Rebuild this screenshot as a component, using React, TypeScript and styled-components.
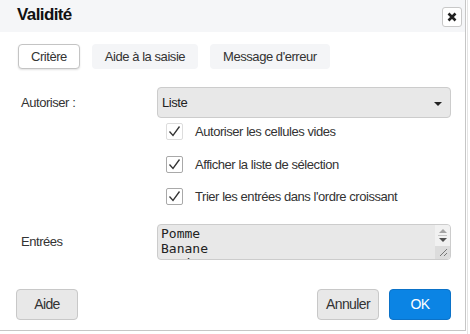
import * as React from 'react'
import styled, { createGlobalStyle } from 'styled-components'

const GlobalStyle = createGlobalStyle`
  html, body {
    margin: 0;
    padding: 0;
    background: #ffffff;
  }
  body {
    font-family: 'Liberation Sans', Arial, sans-serif;
    font-size: 13px;
    letter-spacing: -0.45px;
    color: #333333;
  }
`

const tabs = ['Critère', 'Aide à la saisie', "Message d'erreur"]

const options = [
  'Autoriser les cellules vides',
  'Afficher la liste de sélection',
  "Trier les entrées dans l'ordre croissant",
]

export default function App() {
  return (
    <Page>
      <GlobalStyle />
      <Dialog>
        <Header>
          <Title>Validité</Title>
          <CloseButton aria-label="Fermer">
            <svg width="10" height="10" viewBox="0 0 10 10">
              <path d="M1.5 1.5 L8.5 8.5 M8.5 1.5 L1.5 8.5" stroke="#222" strokeWidth="2.6" />
            </svg>
          </CloseButton>
        </Header>
        <TabBar>
          {tabs.map((tab, i) => (
            <Tab key={tab} active={i === 0}>
              {tab}
            </Tab>
          ))}
        </TabBar>
        <Form>
          <FieldRow>
            <Label>Autoriser :</Label>
            <Select>
              <span>Liste</span>
              <Caret />
            </Select>
          </FieldRow>
          <Checks>
            {options.map((text, i) => (
              <CheckRow key={text}>
                <CheckBox focused={i === 0}>
                  <svg width="15" height="15" viewBox="0 0 15 15">
                    <polyline
                      points="2.5,7.5 6,11.5 12.5,2.5"
                      fill="none"
                      stroke="#333"
                      strokeWidth="1.3"
                    />
                  </svg>
                </CheckBox>
                <CheckLabel>{text}</CheckLabel>
              </CheckRow>
            ))}
          </Checks>
          <FieldRow>
            <Label>Entrées</Label>
            <EntriesBox>
              <Entries readOnly value={'Pomme\nBanane\nCerise\nOrange'} />
              <ScrollRail>
                <ArrowUp />
                <RailDivider />
                <ArrowDown />
                <ResizeCorner>
                  <svg width="9" height="9" viewBox="0 0 9 9">
                    <line x1="1" y1="8" x2="8" y2="1" stroke="#777" strokeWidth="1" />
                    <line x1="5" y1="8" x2="8" y2="5" stroke="#777" strokeWidth="1" />
                  </svg>
                </ResizeCorner>
              </ScrollRail>
            </EntriesBox>
          </FieldRow>
        </Form>
        <Footer>
          <Button>Aide</Button>
          <Spacer />
          <Button>Annuler</Button>
          <Button primary>OK</Button>
        </Footer>
      </Dialog>
      <SheetEdge />
    </Page>
  )
}

const Page = styled.div`
  display: flex;
  width: 470px;
  height: 334px;
  overflow: hidden;
`

const Dialog = styled.div`
  width: 467px;
  height: 332px;
  flex: none;
  box-sizing: border-box;
  margin: -1px 0 0 -1px;
  border: 1px solid #c6c6c6;
  background: #ffffff;
  display: flex;
  flex-direction: column;
`

const SheetEdge = styled.div`
  flex: 1;
  margin-left: 1px;
  border-left: 1px solid #e4e4e4;
`

const Header = styled.div`
  height: 32px;
  flex: none;
  background: #f5f6f8;
  display: flex;
  align-items: center;
  padding: 0 3px 0 17px;
`

const Title = styled.div`
  flex: 1;
  font-size: 17px;
  letter-spacing: -0.6px;
  font-weight: bold;
  color: #111;
  padding-bottom: 2px;
`

const CloseButton = styled.div`
  width: 20px;
  height: 20px;
  box-sizing: border-box;
  border: 1px solid #c8c8c8;
  border-radius: 3px;
  background: #fff;
  display: flex;
  align-items: center;
  justify-content: center;
  margin-top: 1px;
`

const TabBar = styled.div`
  display: flex;
  gap: 12px;
  padding: 12px 0 0 18px;
`

const Tab = styled.div<{ active?: boolean }>`
  height: 25px;
  box-sizing: border-box;
  padding: 0 12px;
  display: flex;
  align-items: center;
  border-radius: 4px;
  border: 1px solid ${p => (p.active ? '#c4c4c4' : 'transparent')};
  background: ${p => (p.active ? '#ffffff' : '#f4f5f7')};
  box-shadow: ${p => (p.active ? '0 1px 2px rgba(0,0,0,0.12)' : 'none')};
  color: #333;
`

const Form = styled.div`
  display: flex;
  flex-direction: column;
  padding: 18px 14px 0 21px;
`

const FieldRow = styled.div`
  display: flex;
  align-items: center;
`

const Label = styled.div`
  width: 136px;
  flex: none;
`

const Select = styled.div`
  flex: 1;
  height: 31px;
  box-sizing: border-box;
  border: 1px solid #cccccc;
  border-radius: 4px;
  background: #e8e8e8;
  display: flex;
  align-items: center;
  justify-content: space-between;
  padding: 0 8px 0 4px;
  color: #222;
  padding-bottom: 1px;
`

const Caret = styled.span`
  width: 0;
  height: 0;
  border-left: 4px solid transparent;
  border-right: 4px solid transparent;
  border-top: 4px solid #222;
  margin-top: 3px;
`

const Checks = styled.div`
  display: flex;
  flex-direction: column;
  gap: 15px;
  padding: 5px 0 18px 145px;
`

const CheckRow = styled.div`
  display: flex;
  align-items: center;
  height: 17.5px;
`

const CheckBox = styled.div<{ focused?: boolean }>`
  width: 17px;
  height: 17px;
  box-sizing: border-box;
  border: 1px solid ${p => (p.focused ? '#dddddd' : '#a9a9a9')};
  border-radius: 2px;
  background: #fff;
  display: flex;
  align-items: center;
  justify-content: center;
  flex: none;
`

const CheckLabel = styled.div`
  margin-left: 12px;
  color: #333;
`

const EntriesBox = styled.div`
  flex: 1;
  height: 36px;
  box-sizing: border-box;
  border: 1px solid #cccccc;
  border-radius: 4px;
  background: #e8e8e8;
  display: flex;
  overflow: hidden;
`

const Entries = styled.textarea`
  flex: 1;
  min-width: 0;
  border: none;
  outline: none;
  background: transparent;
  font-family: 'DejaVu Sans Mono', monospace;
  font-size: 13px;
  letter-spacing: 0;
  line-height: 15px;
  color: #222;
  padding: 1px 3px;
  overflow: hidden;
  resize: none;
  margin: 0;
`

const ScrollRail = styled.div`
  width: 15px;
  flex: none;
  display: flex;
  flex-direction: column;
  align-items: center;
  background: #f1f1f1;
`

const ArrowUp = styled.span`
  width: 0;
  height: 0;
  margin-top: 4px;
  border-left: 4px solid transparent;
  border-right: 4px solid transparent;
  border-bottom: 4px solid #a3a3a3;
`

const RailDivider = styled.span`
  width: 9px;
  height: 1px;
  margin-top: 2px;
  background: #c4c4c4;
`

const ArrowDown = styled.span`
  width: 0;
  height: 0;
  margin-top: 2px;
  border-left: 4px solid transparent;
  border-right: 4px solid transparent;
  border-top: 4px solid #505050;
`

const ResizeCorner = styled.div`
  margin-top: auto;
  width: 15px;
  height: 13px;
  background: #dcdcdc;
  display: flex;
  align-items: flex-end;
  justify-content: flex-end;
  padding: 0 2px 2px 0;
  box-sizing: border-box;
`

const Footer = styled.div`
  display: flex;
  gap: 10px;
  padding: 29px 14px 0 16px;
`

const Spacer = styled.div`
  flex: 1;
`

const Button = styled.div<{ primary?: boolean }>`
  width: 62px;
  height: 31px;
  box-sizing: border-box;
  border-radius: 4px;
  border: 1px solid ${p => (p.primary ? '#0b72c8' : '#c8c8c8')};
  background: ${p => (p.primary ? '#0b84e4' : '#e8e8e8')};
  color: ${p => (p.primary ? '#ffffff' : '#333333')};
  font-size: 14px;
  letter-spacing: -0.6px;
  display: flex;
  align-items: center;
  justify-content: center;
`
